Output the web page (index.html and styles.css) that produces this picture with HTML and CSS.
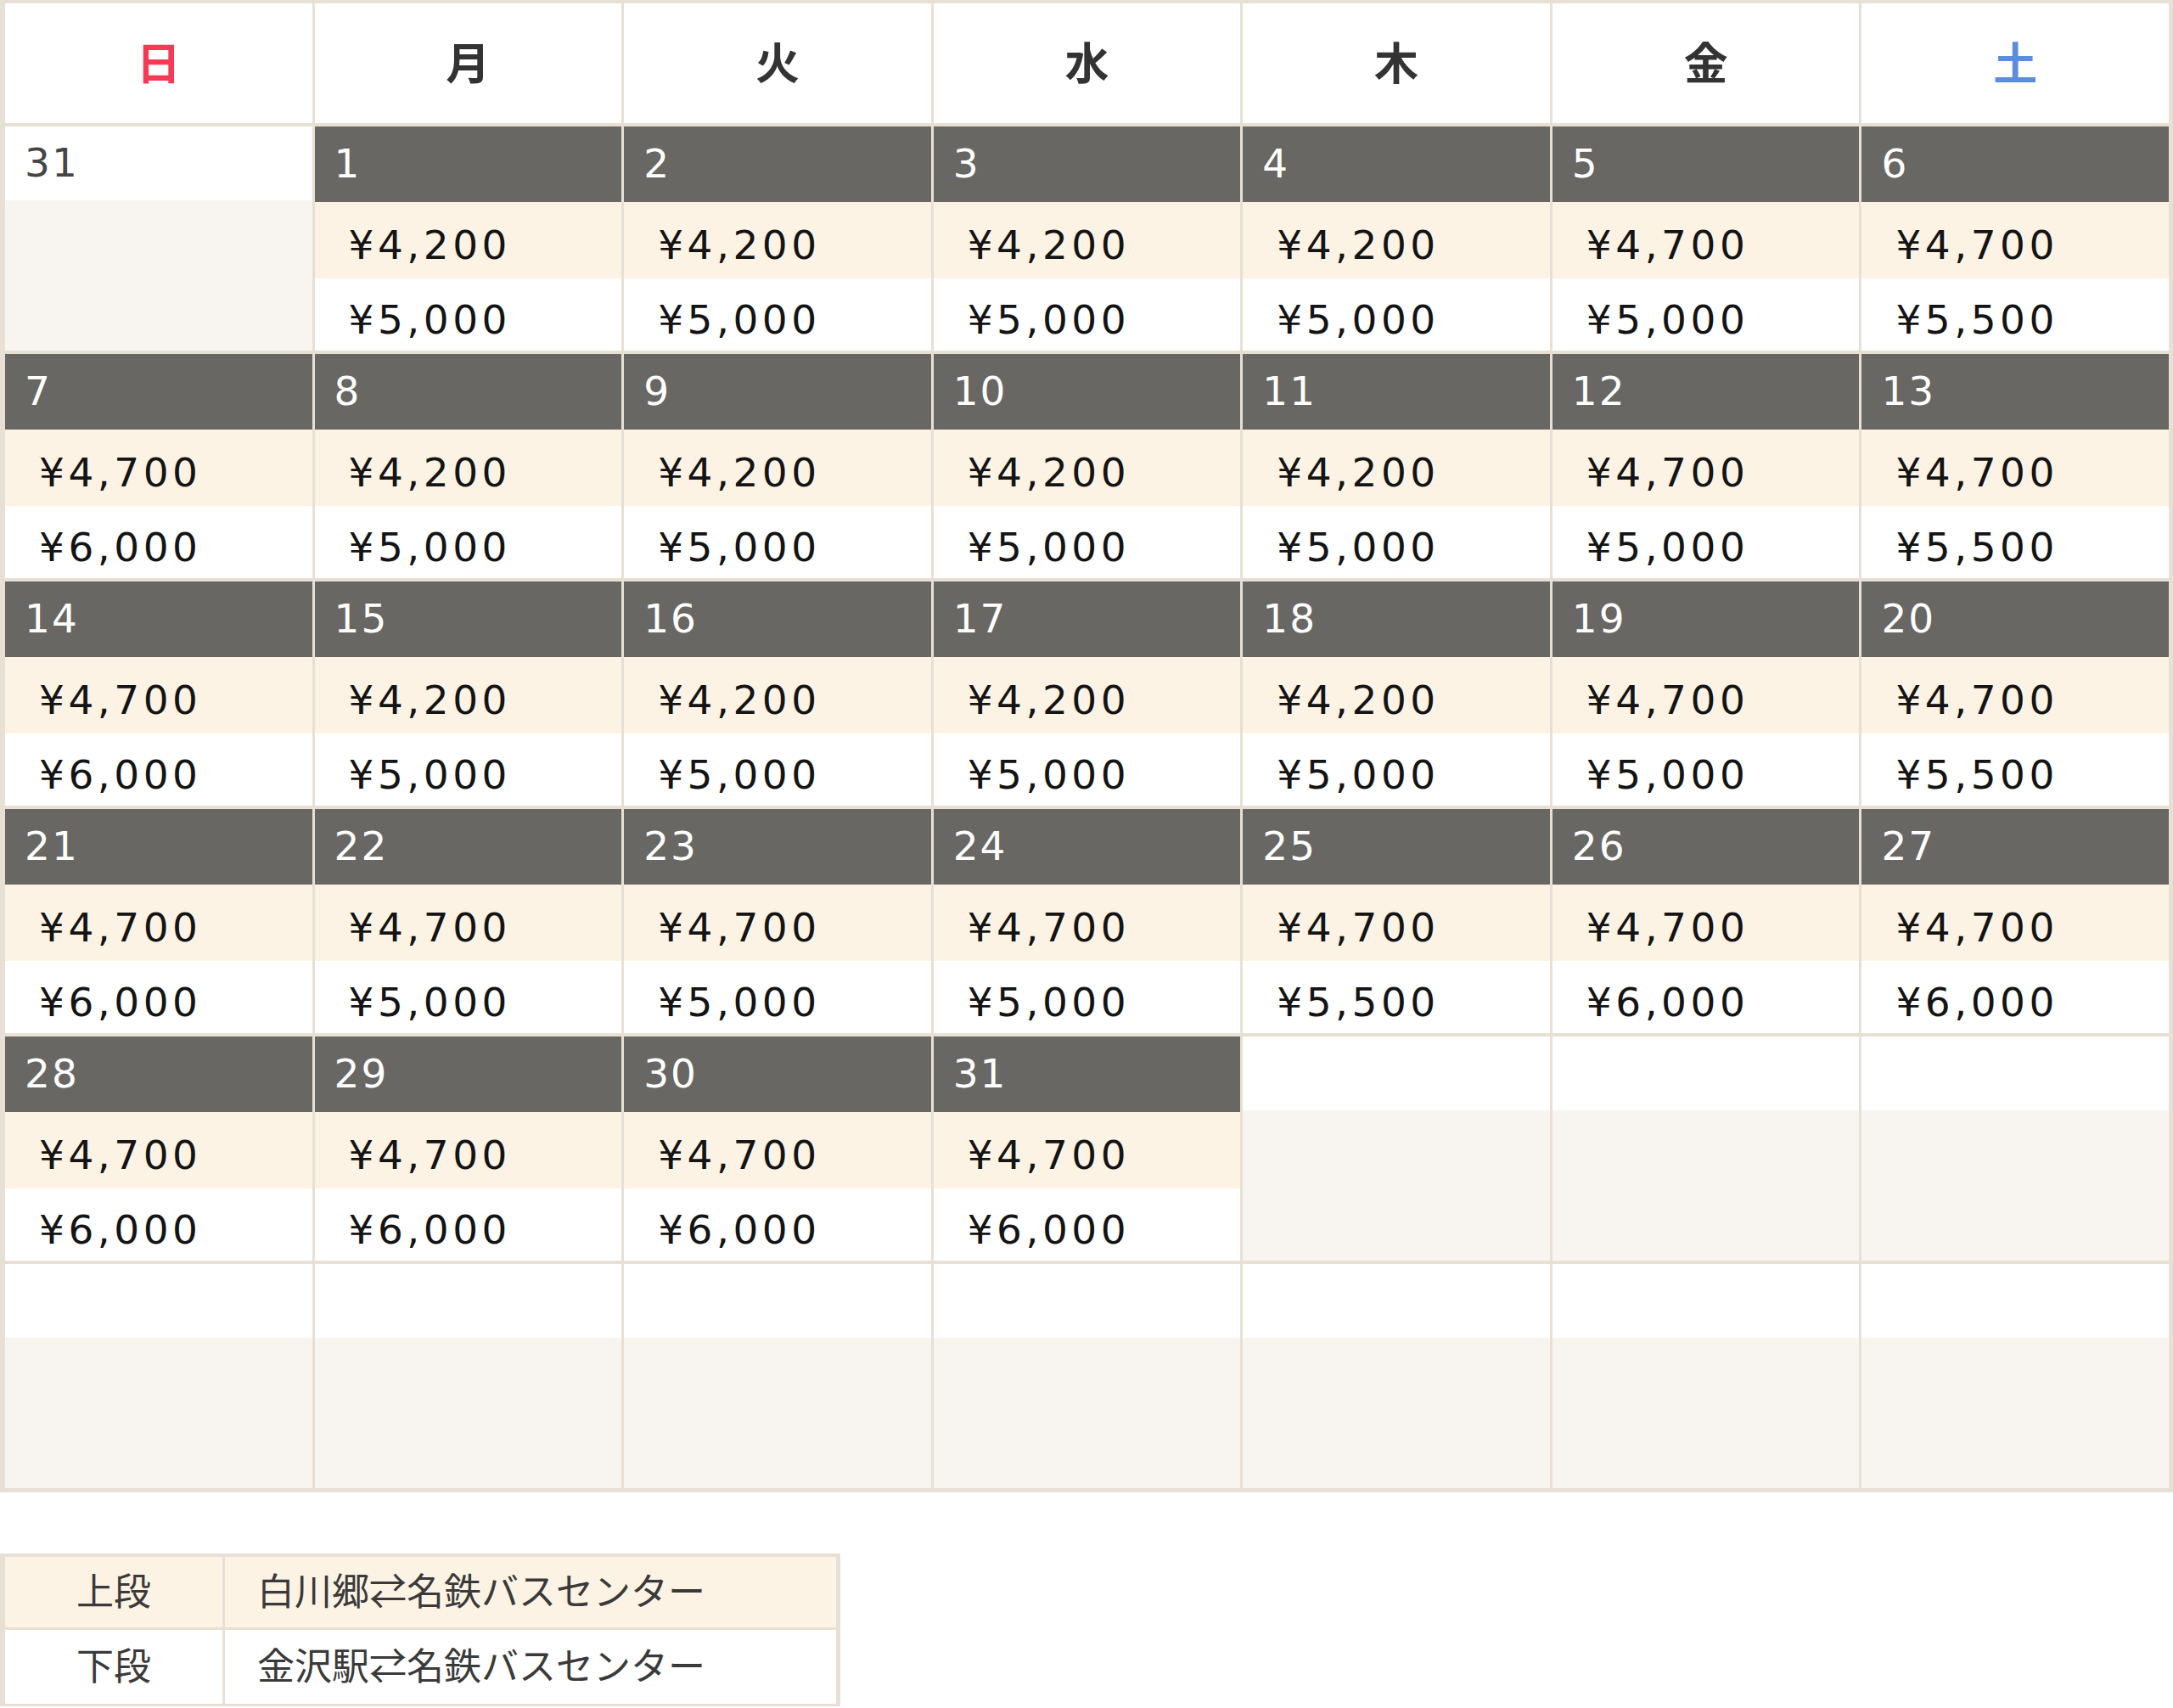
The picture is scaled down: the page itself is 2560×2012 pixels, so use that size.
FILE: index.html
```html
<!DOCTYPE html>
<html lang="ja">
<head>
<meta charset="utf-8">
<title>料金カレンダー</title>
<link rel="stylesheet" href="styles.css">
</head>
<body>
<div class="cal">
  <div class="dow sun">日</div>
  <div class="dow">月</div>
  <div class="dow">火</div>
  <div class="dow">水</div>
  <div class="dow">木</div>
  <div class="dow">金</div>
  <div class="dow sat">土</div>

  <div class="cell off"><div class="date">31</div><div class="blank"></div></div>
  <div class="cell"><div class="date">1</div><div class="p1">¥4,200</div><div class="p2">¥5,000</div></div>
  <div class="cell"><div class="date">2</div><div class="p1">¥4,200</div><div class="p2">¥5,000</div></div>
  <div class="cell"><div class="date">3</div><div class="p1">¥4,200</div><div class="p2">¥5,000</div></div>
  <div class="cell"><div class="date">4</div><div class="p1">¥4,200</div><div class="p2">¥5,000</div></div>
  <div class="cell"><div class="date">5</div><div class="p1">¥4,700</div><div class="p2">¥5,000</div></div>
  <div class="cell"><div class="date">6</div><div class="p1">¥4,700</div><div class="p2">¥5,500</div></div>

  <div class="cell"><div class="date">7</div><div class="p1">¥4,700</div><div class="p2">¥6,000</div></div>
  <div class="cell"><div class="date">8</div><div class="p1">¥4,200</div><div class="p2">¥5,000</div></div>
  <div class="cell"><div class="date">9</div><div class="p1">¥4,200</div><div class="p2">¥5,000</div></div>
  <div class="cell"><div class="date">10</div><div class="p1">¥4,200</div><div class="p2">¥5,000</div></div>
  <div class="cell"><div class="date">11</div><div class="p1">¥4,200</div><div class="p2">¥5,000</div></div>
  <div class="cell"><div class="date">12</div><div class="p1">¥4,700</div><div class="p2">¥5,000</div></div>
  <div class="cell"><div class="date">13</div><div class="p1">¥4,700</div><div class="p2">¥5,500</div></div>

  <div class="cell"><div class="date">14</div><div class="p1">¥4,700</div><div class="p2">¥6,000</div></div>
  <div class="cell"><div class="date">15</div><div class="p1">¥4,200</div><div class="p2">¥5,000</div></div>
  <div class="cell"><div class="date">16</div><div class="p1">¥4,200</div><div class="p2">¥5,000</div></div>
  <div class="cell"><div class="date">17</div><div class="p1">¥4,200</div><div class="p2">¥5,000</div></div>
  <div class="cell"><div class="date">18</div><div class="p1">¥4,200</div><div class="p2">¥5,000</div></div>
  <div class="cell"><div class="date">19</div><div class="p1">¥4,700</div><div class="p2">¥5,000</div></div>
  <div class="cell"><div class="date">20</div><div class="p1">¥4,700</div><div class="p2">¥5,500</div></div>

  <div class="cell"><div class="date">21</div><div class="p1">¥4,700</div><div class="p2">¥6,000</div></div>
  <div class="cell"><div class="date">22</div><div class="p1">¥4,700</div><div class="p2">¥5,000</div></div>
  <div class="cell"><div class="date">23</div><div class="p1">¥4,700</div><div class="p2">¥5,000</div></div>
  <div class="cell"><div class="date">24</div><div class="p1">¥4,700</div><div class="p2">¥5,000</div></div>
  <div class="cell"><div class="date">25</div><div class="p1">¥4,700</div><div class="p2">¥5,500</div></div>
  <div class="cell"><div class="date">26</div><div class="p1">¥4,700</div><div class="p2">¥6,000</div></div>
  <div class="cell"><div class="date">27</div><div class="p1">¥4,700</div><div class="p2">¥6,000</div></div>

  <div class="cell"><div class="date">28</div><div class="p1">¥4,700</div><div class="p2">¥6,000</div></div>
  <div class="cell"><div class="date">29</div><div class="p1">¥4,700</div><div class="p2">¥6,000</div></div>
  <div class="cell"><div class="date">30</div><div class="p1">¥4,700</div><div class="p2">¥6,000</div></div>
  <div class="cell"><div class="date">31</div><div class="p1">¥4,700</div><div class="p2">¥6,000</div></div>
  <div class="cell off"><div class="date"></div><div class="blank"></div></div>
  <div class="cell off"><div class="date"></div><div class="blank"></div></div>
  <div class="cell off"><div class="date"></div><div class="blank"></div></div>

  <div class="cell off"><div class="date"></div><div class="blank"></div></div>
  <div class="cell off"><div class="date"></div><div class="blank"></div></div>
  <div class="cell off"><div class="date"></div><div class="blank"></div></div>
  <div class="cell off"><div class="date"></div><div class="blank"></div></div>
  <div class="cell off"><div class="date"></div><div class="blank"></div></div>
  <div class="cell off"><div class="date"></div><div class="blank"></div></div>
  <div class="cell off"><div class="date"></div><div class="blank"></div></div>
</div>

<div class="legend">
  <div class="lg-key upper">上段</div>
  <div class="lg-val upper">白川郷⇄名鉄バスセンター</div>
  <div class="lg-key">下段</div>
  <div class="lg-val">金沢駅⇄名鉄バスセンター</div>
</div>
</body>
</html>
```

FILE: styles.css
```css
html, body {
  margin: 0;
  padding: 0;
  background: #ffffff;
}

body {
  font-family: "Noto Sans CJK JP", "Noto Sans", sans-serif;
  color: #333333;
}

.cal {
  display: grid;
  grid-template-columns: repeat(7, 1fr);
  grid-template-rows: 141px repeat(6, 264px);
  column-gap: 3px;
  row-gap: 4px;
  padding: 4px 5px 5px 6px;
  width: 2560px;
  box-sizing: border-box;
  background: #e8e0d5;
}

.dow {
  background: #ffffff;
  display: flex;
  align-items: center;
  justify-content: center;
  font-size: 52px;
  font-weight: 700;
  color: #333333;
  padding-bottom: 6px;
  box-sizing: border-box;
}

.dow.sun { color: #f43a55; }
.dow.sat { color: #5b8ddd; }

.cell {
  display: flex;
  flex-direction: column;
  background: #ffffff;
}

.date {
  height: 89px;
  flex: none;
  box-sizing: border-box;
  padding: 0 0 2px 23px;
  display: flex;
  align-items: center;
  background: #686763;
  color: #ffffff;
  font-family: "DejaVu Sans", "Noto Sans", sans-serif;
  font-size: 47px;
  letter-spacing: 2px;
}

.p1, .p2 {
  box-sizing: border-box;
  display: flex;
  align-items: center;
  padding: 11px 0 0 40px;
  font-family: "DejaVu Sans", "Noto Sans", sans-serif;
  font-size: 47px;
  letter-spacing: 4.5px;
  color: #141414;
}

.p1 {
  height: 90px;
  background: #fdf3e4;
}

.p2 {
  height: 85px;
  background: #ffffff;
}

.off .date {
  background: #ffffff;
  color: #454545;
  height: 87px;
}

.blank {
  flex: 1;
  background: #f8f5f1;
}

.legend {
  display: grid;
  grid-template-columns: 256px 720px;
  grid-template-rows: 83px 87px;
  column-gap: 3px;
  row-gap: 3px;
  padding: 4px 5px 3px 6px;
  margin-top: 72px;
  width: max-content;
  background: #e8e0d5;
}

.lg-key, .lg-val {
  display: flex;
  align-items: center;
  background: #ffffff;
  font-size: 44px;
  color: #3a3a3a;
  padding-bottom: 7px;
  box-sizing: border-box;
}

.lg-key {
  justify-content: center;
}

.lg-val {
  padding-left: 38px;
}

.upper {
  background: #fdf3e4;
}
```
